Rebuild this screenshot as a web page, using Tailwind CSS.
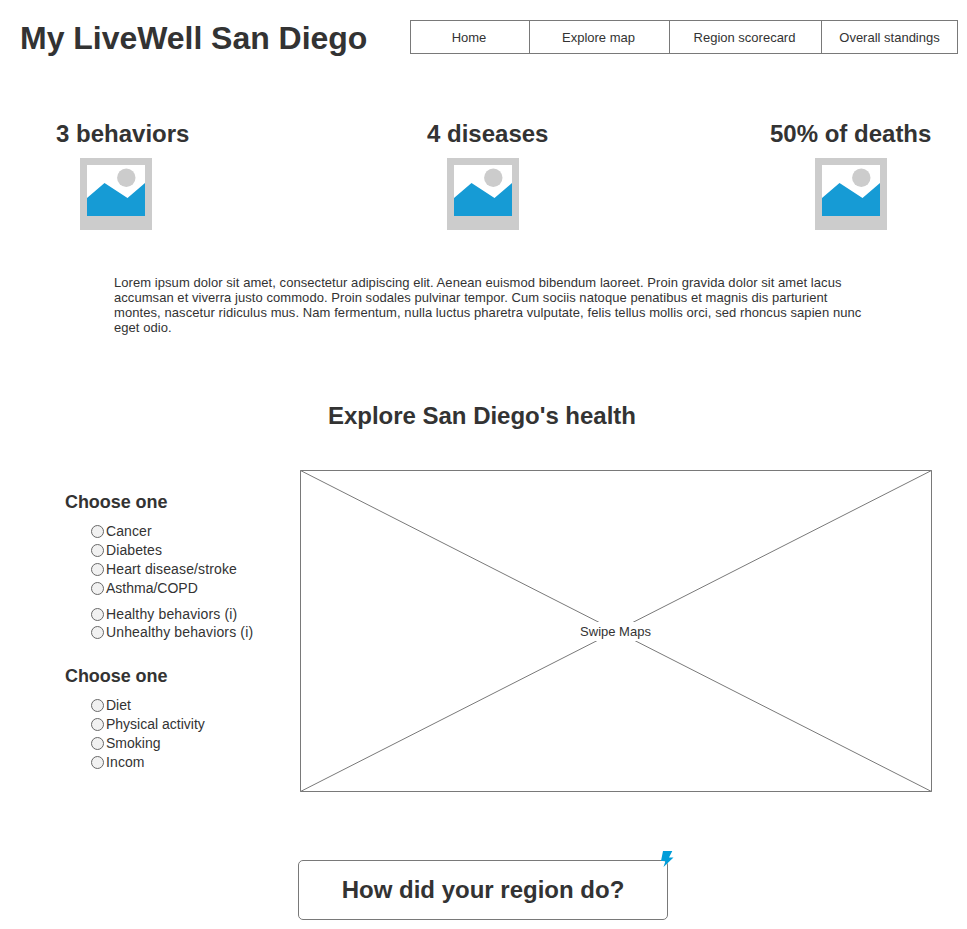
<!DOCTYPE html>
<html lang="en"><head><meta charset="utf-8"><title>My LiveWell San Diego</title>
<script src="https://cdn.jsdelivr.net/npm/@tailwindcss/browser@4"></script></head>
<body class="w-[967px] h-[929px] overflow-hidden bg-white text-[#333] font-['Liberation_Sans',Arial,sans-serif] text-[13px] leading-[15px]">
<svg class="hidden"><symbol id="picture" viewBox="0 0 72 72"><path fill="#ccc" d="M0 0h72v72H0z"/><path fill="#fff" d="M7 7h58v51H7z"/><circle cx="46.3" cy="19.7" r="9.2" fill="#ccc"/><path fill="#169bd5" d="M7 40 24.5 25 47.5 40 65 25V58H7z"/></symbol></svg>
<header class="flex pt-5 pl-5 h-[120px] items-start">
<h1 class="w-[390px] text-[32px] leading-[37px] font-bold whitespace-nowrap tracking-[-0.03px]">My LiveWell San Diego</h1>
<nav class="flex h-[34px] w-[548px] border border-[#797979] text-center leading-[34px] whitespace-nowrap">
<a class="w-[119px] border-r border-[#797979] pr-[2px]">Home</a><a class="w-[140px] border-r border-[#797979] pr-[2px]">Explore map</a><a class="w-[152px] border-r border-[#797979] pr-[2px]">Region scorecard</a><a class="flex-1">Overall standings</a>
</nav></header>
<section class="flex h-[155px] pl-14 whitespace-nowrap">
<div class="w-[371px]"><h2 class="text-2xl leading-7 font-bold">3 behaviors</h2><svg class="w-[72px] h-[72px] ml-6 mt-[10px]"><use href="#picture"/></svg></div>
<div class="w-[343px]"><h2 class="text-2xl leading-7 font-bold">4 diseases</h2><svg class="w-[72px] h-[72px] ml-5 mt-[10px]"><use href="#picture"/></svg></div>
<div><h2 class="text-2xl leading-7 font-bold">50% of deaths</h2><svg class="w-[72px] h-[72px] ml-[45px] mt-[10px]"><use href="#picture"/></svg></div>
</section>
<p class="ml-[114px] h-[127px] whitespace-nowrap tracking-[0.057px]">Lorem ipsum dolor sit amet, consectetur adipiscing elit. Aenean euismod bibendum laoreet. Proin gravida dolor sit amet lacus<br>accumsan et viverra justo commodo. Proin sodales pulvinar tempor. Cum sociis natoque penatibus et magnis dis parturient<br><span class="tracking-[0.075px]">montes, nascetur ridiculus mus. Nam fermentum, nulla luctus pharetra vulputate, felis tellus mollis orci, sed rhoncus sapien nunc</span><br>eget odio.</p>
<h2 class="text-2xl leading-7 font-bold ml-[328px] mb-10 tracking-[-0.02px]">Explore San Diego's health</h2>
<main class="flex h-[390px] pl-[65px]">
<form class="w-[235px] pt-[22px] text-sm leading-[19px] whitespace-nowrap">
<h3 class="text-lg leading-5 font-bold tracking-[-0.06px]">Choose one</h3>
<div class="pl-[26px] pt-[10px]">
<label class="flex items-center gap-[2px] h-[19px] tracking-[0.1px]"><input type="radio" name="a" class="appearance-none w-[13px] h-[13px] rounded-full border border-[#686868] bg-[#f1f1f1]">Cancer</label>
<label class="flex items-center gap-[2px] h-[19px] tracking-[0.1px]"><input type="radio" name="a" class="appearance-none w-[13px] h-[13px] rounded-full border border-[#686868] bg-[#f1f1f1]">Diabetes</label>
<label class="flex items-center gap-[2px] h-[19px] tracking-[0.13px]"><input type="radio" name="a" class="appearance-none w-[13px] h-[13px] rounded-full border border-[#686868] bg-[#f1f1f1]">Heart disease/stroke</label>
<label class="flex items-center gap-[2px] h-[19px]"><input type="radio" name="a" class="appearance-none w-[13px] h-[13px] rounded-full border border-[#686868] bg-[#f1f1f1]">Asthma/COPD</label>
<label class="flex items-center gap-[2px] h-[19px] mt-[7px] tracking-[0.14px]"><input type="radio" name="a" class="appearance-none w-[13px] h-[13px] rounded-full border border-[#686868] bg-[#f1f1f1]">Healthy behaviors (i)</label>
<label class="flex items-center gap-[2px] h-[19px] -mt-px tracking-[0.14px]"><input type="radio" name="a" class="appearance-none w-[13px] h-[13px] rounded-full border border-[#686868] bg-[#f1f1f1]">Unhealthy behaviors (i)</label>
</div>
<h3 class="text-lg leading-5 font-bold mt-6 tracking-[-0.06px]">Choose one</h3>
<div class="pl-[26px] pt-[10px]">
<label class="flex items-center gap-[2px] h-[19px]"><input type="radio" name="b" class="appearance-none w-[13px] h-[13px] rounded-full border border-[#686868] bg-[#f1f1f1]">Diet</label>
<label class="flex items-center gap-[2px] h-[19px]"><input type="radio" name="b" class="appearance-none w-[13px] h-[13px] rounded-full border border-[#686868] bg-[#f1f1f1]">Physical activity</label>
<label class="flex items-center gap-[2px] h-[19px]"><input type="radio" name="b" class="appearance-none w-[13px] h-[13px] rounded-full border border-[#686868] bg-[#f1f1f1]">Smoking</label>
<label class="flex items-center gap-[2px] h-[19px] tracking-[0.1px]"><input type="radio" name="b" class="appearance-none w-[13px] h-[13px] rounded-full border border-[#686868] bg-[#f1f1f1]">Incom</label>
</div></form>
<div class="relative w-[632px] h-[322px] flex items-center justify-center">
<svg class="absolute inset-0" width="632" height="322" fill="none" stroke="#797979"><path d="M.5.5h631v321H.5zM.5.5l631 321M.5 321.5l631-321"/></svg>
<span class="relative bg-white h-[19px] leading-5 w-[74px] text-center whitespace-nowrap pr-px">Swipe Maps</span>
</div></main>
<button class="relative block ml-[298px] w-[370px] h-[60px] border border-[#797979] rounded-[5px] text-2xl leading-7 font-bold">How did your region do?
<svg class="absolute left-[361px] -top-[10px]" width="14" height="17"><path fill="#009dd9" d="M3 0H12.3L9 6.5H13.5L3.5 16 5.5 10H1z"/></svg>
</button>
</body></html>
